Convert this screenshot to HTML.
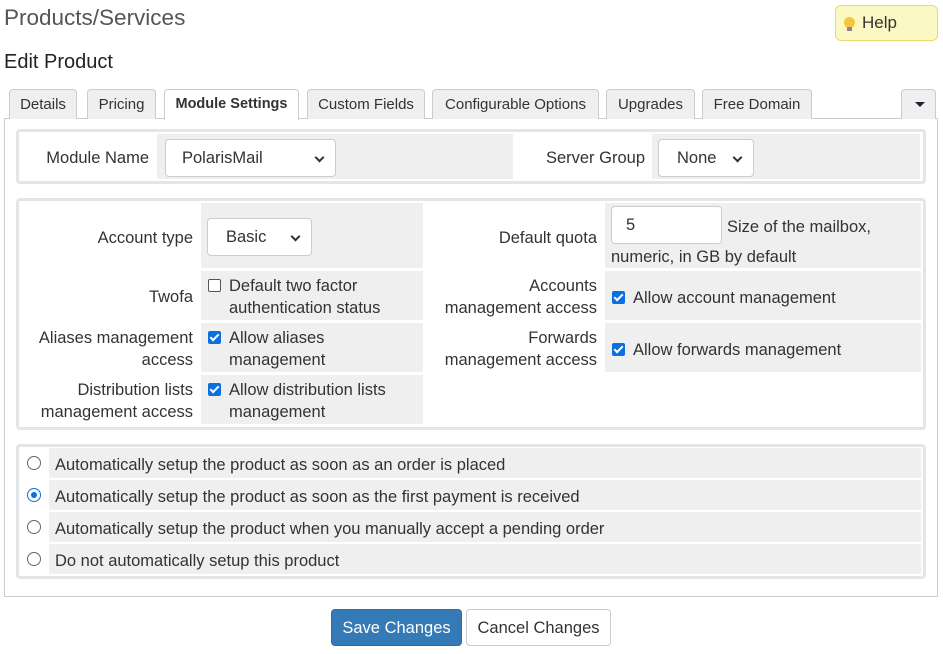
<!DOCTYPE html>
<html><head><style>
*{box-sizing:border-box;margin:0;padding:0}
body{width:943px;height:654px;background:#fff;font-family:"Liberation Sans",sans-serif;font-size:16.5px;color:#333;position:relative;overflow:hidden}
.a{position:absolute}
.tab{position:absolute;top:89px;height:30px;background:#efefef;border:1px solid #ccc;border-bottom:none;border-radius:4px 4px 0 0;font-size:15px;color:#333;text-align:center;line-height:29px}
.box{position:absolute;border:3px solid #e3e6e8;border-radius:4px;left:16px;width:910px}
.g{position:absolute;background:#efefef}
.lbl{position:absolute;text-align:right;line-height:22px}
.sel{position:absolute;background:#fff;border:1px solid #ccc;border-radius:4px;height:38px;line-height:37px;padding-left:16px}
.sel:after{content:"";position:absolute;right:12px;top:14px;width:5px;height:5px;border-right:2px solid #333;border-bottom:2px solid #333;transform:rotate(45deg)}
.cb{position:absolute;width:13px;height:13px;border-radius:2px;background:#0b6fe0}
.cb:after{content:"";position:absolute;left:4px;top:1px;width:3px;height:7px;border-right:2px solid #fff;border-bottom:2px solid #fff;transform:rotate(45deg)}
.cb.off{background:#fff;border:1px solid #555}.cb.off:after{display:none}
.rd{position:absolute;left:27px;width:14px;height:14px;border:1px solid #666;border-radius:50%;background:#fff}
.rd.on{border:1.5px solid #0b6fe0}.rd.on:after{content:"";position:absolute;left:2.5px;top:2.5px;width:6px;height:6px;border-radius:50%;background:#0b6fe0}
.t{position:absolute;line-height:22px}
</style></head><body>
<div class="a" style="left:4px;top:5px;font-size:22.5px;color:#555">Products/Services</div>
<div class="a" style="left:4px;top:51px;font-size:20px;color:#222">Edit Product</div>
<div class="a" style="left:835px;top:5px;width:103px;height:36px;background:#fcf8c3;border:1px solid #e8dc6a;border-radius:6px;font-size:17px;line-height:34px;padding-left:26px;color:#333">
<span class="a" style="left:8px;top:11px;width:11px;height:11px;border-radius:50%;background:#f5c542"></span><span class="a" style="left:11px;top:21px;width:5px;height:4px;background:#888"></span>Help</div>
<div class="a" style="left:4px;top:118px;width:934px;height:479px;border:1px solid #ccc"></div>
<div class="tab" style="left:9px;width:68px">Details</div>
<div class="tab" style="left:87px;width:69px">Pricing</div>
<div class="tab" style="left:164px;width:135px;background:#fff;height:31px;font-weight:bold;color:#333;font-size:14.5px">Module Settings</div>
<div class="tab" style="left:307px;width:118px">Custom Fields</div>
<div class="tab" style="left:432px;width:167px">Configurable Options</div>
<div class="tab" style="left:606px;width:89px">Upgrades</div>
<div class="tab" style="left:702px;width:110px">Free Domain</div>
<div class="tab" style="left:901px;width:35px"><span class="a" style="left:13px;top:12px;border-left:5px solid transparent;border-right:5px solid transparent;border-top:5px solid #223"></span></div>

<div class="box" style="top:129px;height:55px">
<div class="g" style="left:138px;top:2px;width:356px;height:45px"></div>
<div class="g" style="left:633px;top:2px;width:268px;height:45px"></div>
<div class="lbl" style="left:0;width:130px;top:15px">Module Name</div>
<div class="sel" style="left:146px;top:7px;width:171px">PolarisMail</div>
<div class="lbl" style="left:480px;width:146px;top:15px">Server Group</div>
<div class="sel" style="left:639px;top:7px;width:96px;padding-left:18px">None</div>
</div>

<div class="box" style="top:198px;height:232px">
<div class="g" style="left:182px;top:2px;width:222px;height:65px"></div>
<div class="g" style="left:586px;top:2px;width:316px;height:65px"></div>
<div class="g" style="left:182px;top:70px;width:222px;height:49px"></div>
<div class="g" style="left:586px;top:70px;width:316px;height:49px"></div>
<div class="g" style="left:182px;top:122px;width:222px;height:49px"></div>
<div class="g" style="left:586px;top:122px;width:316px;height:49px"></div>
<div class="g" style="left:182px;top:174px;width:222px;height:49px"></div>
<div class="lbl" style="left:0;width:174px;top:26px">Account type</div>
<div class="sel" style="left:188px;top:17px;width:105px;padding-left:18px">Basic</div>
<div class="lbl" style="left:0;width:174px;top:85px">Twofa</div>
<div class="cb off" style="left:189px;top:78px"></div>
<div class="t" style="left:210px;top:74px">Default two factor<br>authentication status</div>
<div class="lbl" style="left:0;width:174px;top:126px">Aliases management<br>access</div>
<div class="cb" style="left:189px;top:130px"></div>
<div class="t" style="left:210px;top:126px">Allow aliases<br>management</div>
<div class="lbl" style="left:0;width:174px;top:178px">Distribution lists<br>management access</div>
<div class="cb" style="left:189px;top:182px"></div>
<div class="t" style="left:210px;top:178px">Allow distribution lists<br>management</div>
<div class="lbl" style="left:400px;width:178px;top:26px">Default quota</div>
<div class="a" style="left:592px;top:5px;width:111px;height:38px;background:#fff;border:1px solid #ccc;border-radius:4px;padding-left:14px;line-height:36px">5</div>
<div class="t" style="left:708px;top:15px">Size of the mailbox,</div>
<div class="t" style="left:592px;top:45px">numeric, in GB by default</div>
<div class="lbl" style="left:400px;width:178px;top:74px">Accounts<br>management access</div>
<div class="cb" style="left:593px;top:90px"></div>
<div class="t" style="left:614px;top:86px">Allow account management</div>
<div class="lbl" style="left:400px;width:178px;top:126px">Forwards<br>management access</div>
<div class="cb" style="left:593px;top:142px"></div>
<div class="t" style="left:614px;top:138px">Allow forwards management</div>
</div>

<div class="box" style="top:444px;height:135px">
<div class="g" style="left:30px;top:1px;width:872px;height:30px"></div>
<div class="g" style="left:30px;top:33px;width:872px;height:30px"></div>
<div class="g" style="left:30px;top:65px;width:872px;height:30px"></div>
<div class="g" style="left:30px;top:97px;width:872px;height:30px"></div>
</div>
<div class="rd" style="top:456px"></div>
<div class="rd on" style="top:488px"></div>
<div class="rd" style="top:520px"></div>
<div class="rd" style="top:552px"></div>
<div class="t" style="left:55px;top:454px">Automatically setup the product as soon as an order is placed</div>
<div class="t" style="left:55px;top:486px">Automatically setup the product as soon as the first payment is received</div>
<div class="t" style="left:55px;top:518px">Automatically setup the product when you manually accept a pending order</div>
<div class="t" style="left:55px;top:550px">Do not automatically setup this product</div>

<div class="a" style="left:331px;top:609px;width:131px;height:37px;background:#337ab7;border:1px solid #2e6da4;border-radius:4px;color:#fff;font-size:16.5px;text-align:center;line-height:36px">Save Changes</div>
<div class="a" style="left:466px;top:609px;width:145px;height:37px;background:#fff;border:1px solid #ccc;border-radius:4px;color:#333;font-size:16.5px;text-align:center;line-height:36px">Cancel Changes</div>
</body></html>
